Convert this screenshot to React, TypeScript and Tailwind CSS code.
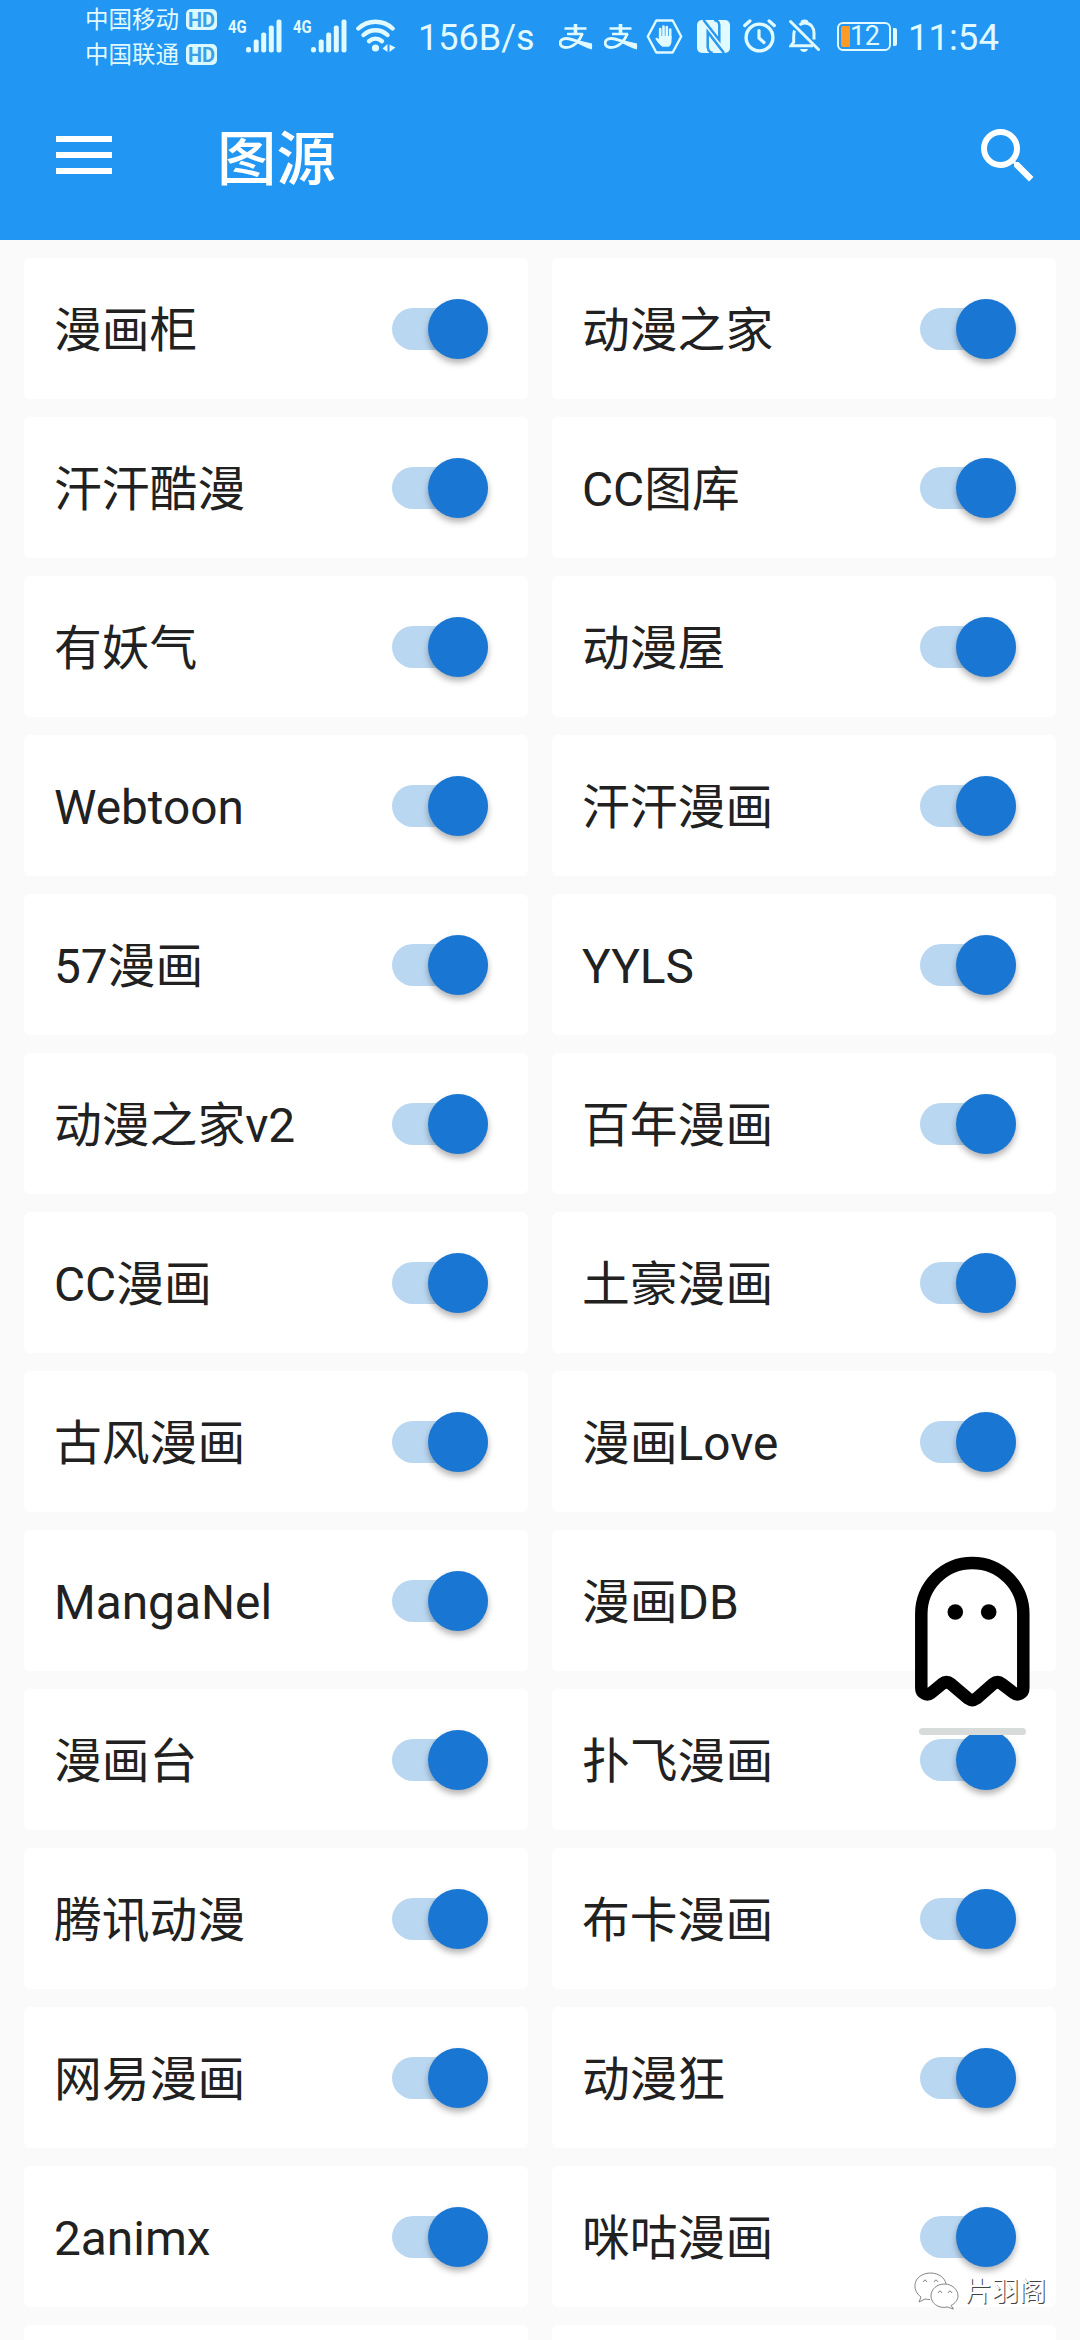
import { useState } from "react";

const SOURCES = [
  "漫画柜",
  "动漫之家",
  "汗汗酷漫",
  "CC图库",
  "有妖气",
  "动漫屋",
  "Webtoon",
  "汗汗漫画",
  "57漫画",
  "YYLS",
  "动漫之家v2",
  "百年漫画",
  "CC漫画",
  "土豪漫画",
  "古风漫画",
  "漫画Love",
  "MangaNel",
  "漫画DB",
  "漫画台",
  "扑飞漫画",
  "腾讯动漫",
  "布卡漫画",
  "网易漫画",
  "动漫狂",
  "2animx",
  "咪咕漫画"
];

function Carrier({ name }: { name: string }) {
  return (
    <div className="flex h-[35px] items-center gap-[7px]">
      <span className="pt-[2px] text-[23.5px] leading-none whitespace-nowrap">{name}</span>
      <span className="flex h-[21px] w-[31px] items-center justify-center rounded-[5px] bg-[#dcf8ff] text-[20px] leading-none font-bold text-[#3d9fe8]">
        HD
      </span>
    </div>
  );
}

function Signal() {
  return (
    <div className="flex items-start">
      <span className="-mt-[4px] w-[18px] origin-left scale-x-[0.78] text-[19px] leading-[24px] font-bold">4G</span>
      <svg className="h-[34px] w-[36px]" viewBox="18 0 36 34" fill="currentColor">
        <rect x="18" y="28" width="5" height="5.5" rx="2.2" />
        <rect x="25.7" y="20.5" width="5" height="13" rx="2" />
        <rect x="33.2" y="13.5" width="5" height="20" rx="2" />
        <rect x="40.8" y="6.5" width="5" height="27" rx="2" />
        <rect x="48.5" y="0.5" width="5" height="33" rx="2" />
      </svg>
    </div>
  );
}

function Wifi() {
  return (
    <svg className="h-[34px] w-[40px]" viewBox="0 0 40 34" fill="none" stroke="currentColor" strokeWidth="4.4" strokeLinecap="round">
      <path d="M2.4 9.5C12 .5 27 .5 36.6 9.5" />
      <path d="M7.5 16C14.5 9.6 24.5 9.6 31.5 16" />
      <path d="M13 22.2c4-3.4 9-3.4 13 0" />
      <circle cx="19.5" cy="29" r="3.6" fill="currentColor" stroke="none" />
      <path d="M31.5 25v8l-5-3.6zM33.500 25.500l6 3-6 4.500z" fill="currentColor" stroke="none" />
    </svg>
  );
}

function Alipay() {
  return (
    <svg className="h-[26px] w-[34px]" viewBox="0 0 34 26" fill="none" stroke="currentColor">
      <path d="M16.500 0v9" strokeWidth="3.600" />
      <path d="M5.500 4.500h22M8 10h16" strokeWidth="2.600" />
      <path d="M23.500 9.500C20.500 17.500 14 23.500 7 23.500c-8 0-7.500-9 0-9 8 0 14 5 26 8.500" strokeWidth="2.800" />
      <path d="M18 16l15 3.500v6c-6-1.500-10-4-16-7z" fill="currentColor" stroke="none" />
    </svg>
  );
}

function HandHexagon() {
  return (
    <svg className="h-[35px] w-[37px]" viewBox="0 0 37 35" fill="none" stroke="currentColor">
      <path d="M10.300 1.500h16.400L35.200 17.500l-8.500 16H10.300l-8.500-16z" strokeWidth="2.400" strokeLinejoin="round" />
      <path d="M14.200 10v9M17.500 7.500v11M20.800 8v11M24.200 10.500v9" strokeWidth="2.600" strokeLinecap="round" />
      <path d="M12.900 17h12.600v5.500c0 3-2 5.300-3.500 5.300h-5.500c-2.500-1.500-5.500-5-7.300-8.300 1.400-1.500 2.500-.5 3.700.8z" fill="currentColor" stroke="none" />
    </svg>
  );
}

function Nfc() {
  return (
    <svg className="h-[33px] w-[33px]" viewBox="0 0 33 33" fill="none">
      <rect width="33" height="33" rx="5" fill="currentColor" />
      <path d="M6.500 0L22.300 20V4.500M17 0q5 .5 5.300 5M10.700 28V12L27 33M10.700 27q.3 5 5 6" stroke="#2b98ef" strokeWidth="2.500" />
    </svg>
  );
}

function AlarmClock() {
  return (
    <svg className="h-[34px] w-[33px]" viewBox="0 0 33 34" fill="none" stroke="currentColor" strokeLinecap="round">
      <circle cx="16.500" cy="18.500" r="13.400" strokeWidth="3.400" />
      <path d="M1.800 6.500l5-4.500M31.200 6.500l-5-4.500" strokeWidth="3.400" />
      <path d="M16 11.500v7.500l5 4.500" strokeWidth="3.200" />
    </svg>
  );
}

function BellOff() {
  return (
    <svg className="h-[34px] w-[32px]" viewBox="0 0 32 34" fill="none" stroke="currentColor" strokeWidth="3">
      <path d="M5.500 11.500c-1 3-.8 6-.8 11.500L2 26.800h22" />
      <path d="M10.500 6c2-1.800 3.500-2 5.500-2 6 0 9 5 9 10v6.500" />
      <path d="M13 3.500c0-2 5-2 5 0" />
      <path d="M1.500 2.500l28 28" strokeLinecap="round" />
      <path d="M11 30c1 4 7 4 8 0z" fill="currentColor" stroke="none" />
    </svg>
  );
}

function Battery() {
  return (
    <div className="flex items-center gap-[2px]">
      <div className="flex h-[29px] w-[54px] items-center rounded-[6px] border-2 border-current pl-[2px]">
        <span className="h-[21px] w-[9px] rounded-l-[2px] bg-[#ff9a26]" />
        <span className="text-[27px] leading-none tracking-[-0.5px]">12</span>
      </div>
      <span className="h-[18px] w-[4px] rounded-r-[2px] bg-current" />
    </div>
  );
}

function StatusBar() {
  return (
    <div className="flex h-[72px] items-start text-[#e0faff]">
      <div className="ml-[85px] flex w-[132px] flex-col pt-[2px]">
        <Carrier name="中国移动" />
        <Carrier name="中国联通" />
      </div>
      <div className="flex pt-[19px]">
        <div className="ml-[11px]"><Signal /></div>
        <div className="ml-[11px]"><Signal /></div>
        <div className="ml-[9px]"><Wifi /></div>
      </div>
      <span className="ml-[22px] w-[140px] pt-[17px] text-[36px] leading-[42px]">156B/s</span>
      <div className="ml-px flex h-[72px] items-start pt-[19px]">
        <div className="pt-[5px]"><Alipay /></div>
        <div className="ml-[11px] pt-[5px]"><Alipay /></div>
        <div className="ml-[8px]"><HandHexagon /></div>
        <div className="ml-[14px] pt-px"><Nfc /></div>
        <div className="ml-[13px]"><AlarmClock /></div>
        <div className="ml-[13px]"><BellOff /></div>
        <div className="ml-[16px] pt-[3px]"><Battery /></div>
      </div>
      <span className="ml-[11px] pt-[17px] text-[36.5px] leading-[42px]">11:54</span>
    </div>
  );
}

function Toolbar() {
  return (
    <div className="flex h-[168px] items-start text-white">
      <button type="button" aria-label="menu" className="mt-[64px] ml-[56px] flex w-[56px] flex-col gap-[10px]">
        <span className="h-[6px] bg-white" />
        <span className="h-[6px] bg-white" />
        <span className="h-[6px] bg-white" />
      </button>
      <h1 className="mt-[53px] ml-[105px] text-[59.5px] leading-[70px] font-medium">图源</h1>
      <button type="button" aria-label="search" className="mt-[48px] mr-[36px] ml-auto">
        <svg className="size-[72px]" viewBox="0 0 24 24" fill="currentColor">
          <path d="M15.500 14h-.79l-.28-.27A6.471 6.471 0 0 0 16 9.500 6.500 6.500 0 1 0 9.500 16c1.610 0 3.090-.59 4.230-1.570l.27.28v.79l5 4.990L20.490 19l-4.990-5zm-6 0C7.010 14 5 11.990 5 9.500S7.010 5 9.500 5 14 7.010 14 9.500 11.990 14 9.500 14z" />
        </svg>
      </button>
    </div>
  );
}

function Switch({ checked, onChange }: { checked: boolean; onChange: () => void }) {
  return (
    <button
      type="button"
      role="switch"
      aria-checked={checked}
      onClick={onChange}
      className={`flex h-[42px] w-[96px] items-center rounded-full ${
        checked ? "justify-end bg-[#bad7f1]" : "justify-start bg-[#b9b9b9]"
      }`}
    >
      <span
        className={`size-[60px] shrink-0 rounded-full shadow-[0_4px_6px_rgba(0,0,0,0.3)] ${
          checked ? "bg-[#1976d2]" : "bg-[#f1f1f1]"
        }`}
      />
    </button>
  );
}

function SourceCard({ title }: { title: string }) {
  const [enabled, setEnabled] = useState(true);

  return (
    <div className="flex h-[141px] items-center justify-between rounded-[6px] bg-white pr-[40px] pl-[30px]">
      <span className="pt-[4px] text-[47.8px] leading-[60px] whitespace-nowrap text-[#212121]">{title}</span>
      <Switch checked={enabled} onChange={() => setEnabled((v) => !v)} />
    </div>
  );
}

// Floating ghost that sits on top of the list
function Ghost() {
  return (
    <div className="absolute top-[1556px] left-[915px] flex w-[115px] flex-col items-center">
      <svg className="h-[152px] w-[115px]" viewBox="0 0 115 152">
        <path
          d="M6.300 132V58a51 51 0 0 1 102 0v74c0 5.500-5.500 8-9.500 5L87 128q-4.500-3.500-9 0L61.500 142.500q-4.200 3-8.400 0L36 128q-4.500-3.500-9 0l-11 9c-4 3-9.700.5-9.700-5z"
          fill="#fff"
          stroke="#000"
          strokeWidth="12.500"
          strokeLinejoin="round"
        />
        <circle cx="40.300" cy="56" r="7.800" />
        <circle cx="73.700" cy="56" r="7.800" />
      </svg>
      <span className="mt-[20px] h-[7px] w-[107px] rounded-full bg-[#d7dbda]" />
    </div>
  );
}

function Watermark() {
  return (
    <div className="absolute top-[2270px] left-[913px] flex items-center gap-[6px]">
      <svg className="h-[40px] w-[46px]" viewBox="0 0 46 40" fill="#fff" stroke="#777" strokeWidth="0.9">
        <path d="M8 26C-2 19 0 3 17 2c9 0 15 5 16 11M8 26l-2 5 6-3c2 .5 3 .5 5 .5" />
        <path d="M38 34.500l2.500 3.500-6-2C25 38 18 32 18 25s6-12 13.500-12S45 18.500 45 25c0 4-3 7.500-7 9.500z" />
        <path d="M10 11q2-4 4 0M21 11q2-4 4 0M25 22q2-4 4 0M35 22q2-4 4 0" fill="none" />
      </svg>
      <span className="pt-[2px] text-[27px] leading-[40px] text-white [text-shadow:1px_1px_0_#444]">片羽阁</span>
    </div>
  );
}

export default function App() {
  return (
    <div className="relative h-[2340px] w-[1080px] overflow-hidden bg-[#fafafa] font-[Roboto,'Noto_Sans_CJK_SC',sans-serif]">
      <header className="h-[240px] bg-[#2196f3]">
        <StatusBar />
        <Toolbar />
      </header>
      <main className="grid grid-cols-2 gap-x-[24px] gap-y-[18px] px-[24px] pt-[18px]">
        {SOURCES.map((title) => (
          <SourceCard key={title} title={title} />
        ))}
        <div className="h-[141px] rounded-[6px] bg-white" />
        <div className="h-[141px] rounded-[6px] bg-white" />
      </main>
      <Ghost />
      <Watermark />
    </div>
  );
}
